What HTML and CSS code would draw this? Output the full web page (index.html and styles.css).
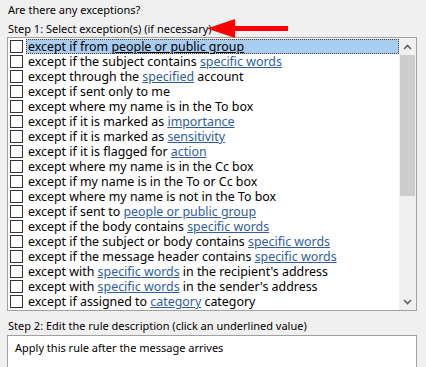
FILE: index.html
```html
<!DOCTYPE html>
<html lang="en">
<head>
    <meta charset="UTF-8">
    <title>Rules Wizard - Exceptions</title>
    <link rel="stylesheet" href="styles.css">
</head>
<body>
    <div class="wizard">
        <div class="label question">Are there any exceptions?</div>
        <div class="label step">
            <span>Step 1: Select exception(s) (if necessary)</span>
            <svg class="pointer" width="82" height="20" viewBox="0 0 82 20">
                <polygon points="0,9.5 28,0 28,7 81,7 81,12 28,12 28,19" fill="#ff0000"/>
            </svg>
        </div>

        <div class="listbox">
            <div class="rows">
                <div class="row selected"><span class="check"></span><span class="text">except if from <u>people or public group</u></span></div>
                <div class="row"><span class="check"></span><span class="text">except if the subject contains <a>specific words</a></span></div>
                <div class="row"><span class="check"></span><span class="text">except through the <a>specified</a> account</span></div>
                <div class="row"><span class="check"></span><span class="text">except if sent only to me</span></div>
                <div class="row"><span class="check"></span><span class="text">except where my name is in the To box</span></div>
                <div class="row"><span class="check"></span><span class="text">except if it is marked as <a>importance</a></span></div>
                <div class="row"><span class="check"></span><span class="text">except if it is marked as <a>sensitivity</a></span></div>
                <div class="row"><span class="check"></span><span class="text">except if it is flagged for <a>action</a></span></div>
                <div class="row"><span class="check"></span><span class="text">except where my name is in the Cc box</span></div>
                <div class="row"><span class="check"></span><span class="text">except if my name is in the To or Cc box</span></div>
                <div class="row"><span class="check"></span><span class="text">except where my name is not in the To box</span></div>
                <div class="row"><span class="check"></span><span class="text">except if sent to <a>people or public group</a></span></div>
                <div class="row"><span class="check"></span><span class="text">except if the body contains <a>specific words</a></span></div>
                <div class="row"><span class="check"></span><span class="text">except if the subject or body contains <a>specific words</a></span></div>
                <div class="row"><span class="check"></span><span class="text">except if the message header contains <a>specific words</a></span></div>
                <div class="row"><span class="check"></span><span class="text">except with <a>specific words</a> in the recipient's address</span></div>
                <div class="row"><span class="check"></span><span class="text">except with <a>specific words</a> in the sender's address</span></div>
                <div class="row"><span class="check"></span><span class="text">except if assigned to <a>category</a> category</span></div>
            </div>
            <div class="scrollbar">
                <div class="sb-btn">
                    <svg width="9" height="6" viewBox="0 0 9 6"><polyline points="1,5 4.5,1.5 8,5" fill="none" stroke="#606060" stroke-width="1.6"/></svg>
                </div>
                <div class="sb-track">
                    <div class="sb-thumb"></div>
                </div>
                <div class="sb-btn">
                    <svg width="9" height="6" viewBox="0 0 9 6"><polyline points="1,1 4.5,4.5 8,1" fill="none" stroke="#606060" stroke-width="1.6"/></svg>
                </div>
            </div>
        </div>

        <div class="label step2">Step 2: Edit the rule description (click an underlined value)</div>
        <div class="description">Apply this rule after the message arrives</div>
    </div>
</body>
</html>
```

FILE: styles.css
```css
body {
    margin: 0;
    background: #f0f0f0;
    font-family: "Noto Sans", "Open Sans", sans-serif;
    font-size: 11px;
    color: #000;
}

.wizard {
    padding: 1px 9px 0 7px;
}

.label {
    height: 18px;
    line-height: 17px;
    padding-left: 1px;
}

.step {
    display: flex;
    align-items: center;
}

.pointer {
    margin-left: -5px;
    margin-top: 2px;
}

.listbox {
    display: flex;
    height: 272px;
    background: #fff;
    border: 1px solid #a0a0a0;
}

.rows {
    flex: 1;
    padding-top: 1px;
    overflow: hidden;
}

.row {
    display: flex;
    align-items: center;
    height: 15px;
    font-size: 12.4px;
}

.check {
    flex: none;
    width: 11px;
    height: 11px;
    margin: 0 3px 0 2px;
    border: 1px solid #333;
    background: #fff;
}

.text {
    flex: 1;
    height: 15px;
    line-height: 13px;
    padding-left: 1px;
    white-space: nowrap;
    border: 1px solid transparent;
    box-sizing: border-box;
}

.selected .text {
    background: #a8cdf1;
    border: 1px dotted #5a3a1a;
}

.row a {
    color: #2f5d9d;
    text-decoration: underline;
}

.scrollbar {
    flex: none;
    width: 17px;
    display: flex;
    flex-direction: column;
    background: #f0f0f0;
}

.sb-btn {
    height: 17px;
    display: flex;
    align-items: center;
    justify-content: center;
}

.sb-track {
    flex: 1;
}

.sb-thumb {
    height: 141px;
    margin: 0 1px;
    background: #cdcdcd;
}

.step2 {
    margin-top: 6px;
}

.description {
    height: 60px;
    padding: 3px 7px;
    background: #fff;
    border: 1px solid #a0a0a0;
    line-height: 17px;
}
```
